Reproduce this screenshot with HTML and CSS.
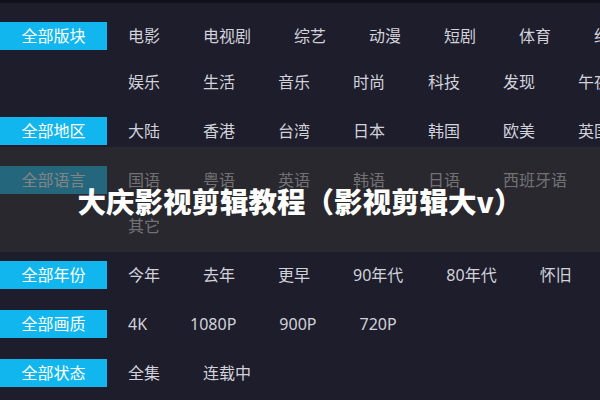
FILE: index.html
```html
<!DOCTYPE html>
<html lang="zh-CN">
<head>
<meta charset="utf-8">
<link rel="stylesheet" href="styles.css">
</head>
<body>
<div class="topbar"></div>
<div class="filters">
  <div class="group">
    <div class="label">全部版块</div>
    <div class="lines">
      <div class="line"><span>电影</span><span>电视剧</span><span>综艺</span><span>动漫</span><span>短剧</span><span>体育</span><span>纪录片</span></div>
      <div class="line"><span>娱乐</span><span>生活</span><span>音乐</span><span>时尚</span><span>科技</span><span>发现</span><span>午夜</span></div>
    </div>
  </div>
  <div class="group">
    <div class="label">全部地区</div>
    <div class="lines">
      <div class="line"><span>大陆</span><span>香港</span><span>台湾</span><span>日本</span><span>韩国</span><span>欧美</span><span>英国</span></div>
    </div>
  </div>
  <div class="group">
    <div class="label">全部语言</div>
    <div class="lines">
      <div class="line"><span>国语</span><span>粤语</span><span>英语</span><span>韩语</span><span>日语</span><span>西班牙语</span></div>
      <div class="line"><span>其它</span></div>
    </div>
  </div>
  <div class="group">
    <div class="label">全部年份</div>
    <div class="lines">
      <div class="line"><span>今年</span><span>去年</span><span>更早</span><span>90年代</span><span>80年代</span><span>怀旧</span></div>
    </div>
  </div>
  <div class="group">
    <div class="label">全部画质</div>
    <div class="lines">
      <div class="line"><span>4K</span><span>1080P</span><span>900P</span><span>720P</span></div>
    </div>
  </div>
  <div class="group">
    <div class="label">全部状态</div>
    <div class="lines">
      <div class="line"><span>全集</span><span>连载中</span></div>
    </div>
  </div>
</div>
<div class="banner"><h1 class="title">大庆影视剪辑教程（影视剪辑大v）</h1></div>
</body>
</html>
```

FILE: styles.css
```css
html, body {
  margin: 0;
  padding: 0;
}
body {
  width: 600px;
  height: 400px;
  overflow: hidden;
  background: #1d1d2c;
  font-family: "Noto Sans", "Noto Sans CJK SC", sans-serif;
  position: relative;
}
.topbar {
  height: 3px;
  background: #11111b;
}
.filters {
  padding-top: 19px;
  display: flex;
  flex-direction: column;
  gap: 21px;
}
.group {
  display: flex;
  align-items: flex-start;
  gap: 21px;
}
.label {
  flex: none;
  width: 107px;
  height: 28px;
  line-height: 28px;
  background: #12b6ee;
  color: #ffffff;
  font-size: 16px;
  text-align: center;
}
.lines {
  display: flex;
  flex-direction: column;
  gap: 18px;
}
.line {
  display: flex;
  gap: 43px;
  white-space: nowrap;
  height: 28px;
  line-height: 28px;
  font-size: 16px;
  color: #d2d2da;
}
.banner {
  position: absolute;
  left: 0;
  right: 0;
  top: 147px;
  height: 105px;
  background: rgba(48, 48, 48, 0.6);
  display: flex;
  align-items: center;
  justify-content: center;
}
.title {
  margin: 2px 0 0;
  font-size: 28.5px;
  font-weight: 900;
  color: #ffffff;
  font-family: "Noto Sans CJK SC", sans-serif;
  letter-spacing: 0;
}
```
